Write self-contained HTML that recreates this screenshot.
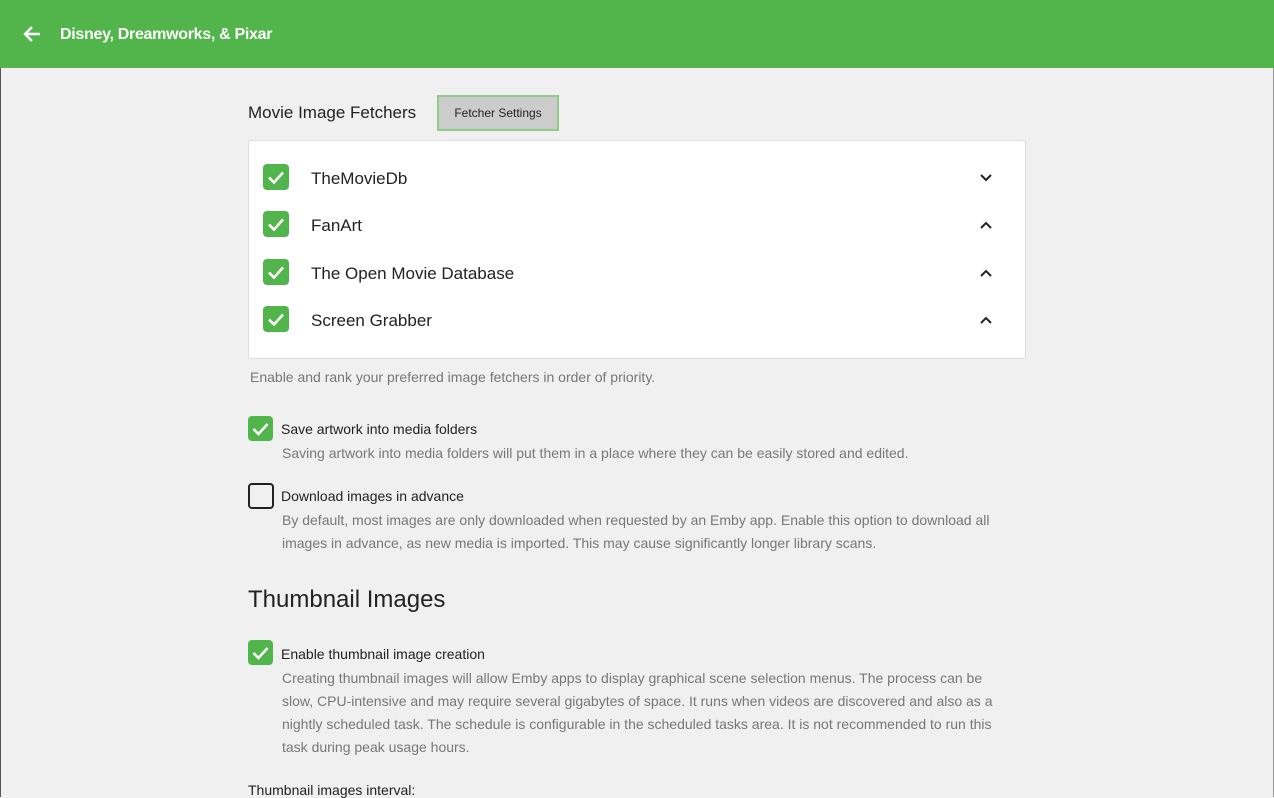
<!DOCTYPE html>
<html><head><style>
*{margin:0;padding:0;box-sizing:border-box}
body{width:1274px;height:797px;overflow:hidden;background:#f0f0f0;font-family:"Liberation Sans",sans-serif;position:relative}
.hdr{position:absolute;left:0;top:0;width:1274px;height:68px;background:#52b54b;color:#fff}
.hdr .t{position:absolute;left:60px;top:26px;font-size:16px;font-weight:bold;letter-spacing:-0.3px}
.abs{position:absolute}
.cb{position:absolute;width:26px;height:26px;border-radius:4px;background:#52b54b}
.cb svg{position:absolute;left:0;top:0}
.lbl{position:absolute;font-size:17px;color:#222}
.chev{position:absolute;left:979px}
.small{position:absolute;font-size:14px;color:#222}
.desc{position:absolute;font-size:14px;color:#777;line-height:23px;width:740px}
</style></head><body>
<div class="hdr">
<svg class="abs" style="left:22px;top:24px" width="20" height="20" viewBox="0 0 20 20"><path d="M18 10H3M10 3L3 10l7 7" stroke="#fff" stroke-width="2.4" fill="none"/></svg>
<div class="t">Disney, Dreamworks, &amp; Pixar</div>
</div>
<div class="abs" style="left:0;top:68px;width:1px;height:729px;background:#555"></div>
<div class="abs" style="left:1273px;top:68px;width:1px;height:729px;background:#999"></div>
<div class="abs" style="left:248px;top:103px;font-size:17px;color:#222">Movie Image Fetchers</div>
<div class="abs" style="left:437px;top:95px;width:122px;height:36px;background:#ccc;border:2px solid #8fcc8a;font-size:12px;color:#222;text-align:center;line-height:32px">Fetcher Settings</div>
<div class="abs" style="left:248px;top:140px;width:778px;height:219px;background:#fff;border:1px solid #ddd;border-radius:3px"></div>

<div class="cb" style="left:263px;top:164px"><svg width="26" height="26"><path d="M6 13.5l5 5 9-10" stroke="#fff" stroke-width="2.6" fill="none"/></svg></div>
<div class="lbl" style="left:311px;top:169px">TheMovieDb</div>
<svg class="chev" style="top:171px" width="14" height="14"><path d="M2 4l5 5 5-5" stroke="#222" stroke-width="2" fill="none"/></svg>

<div class="cb" style="left:263px;top:211px"><svg width="26" height="26"><path d="M6 13.5l5 5 9-10" stroke="#fff" stroke-width="2.6" fill="none"/></svg></div>
<div class="lbl" style="left:311px;top:216px">FanArt</div>
<svg class="chev" style="top:218px" width="14" height="14"><path d="M2 10l5-5 5 5" stroke="#222" stroke-width="2" fill="none"/></svg>

<div class="cb" style="left:263px;top:259px"><svg width="26" height="26"><path d="M6 13.5l5 5 9-10" stroke="#fff" stroke-width="2.6" fill="none"/></svg></div>
<div class="lbl" style="left:311px;top:264px">The Open Movie Database</div>
<svg class="chev" style="top:266px" width="14" height="14"><path d="M2 10l5-5 5 5" stroke="#222" stroke-width="2" fill="none"/></svg>

<div class="cb" style="left:263px;top:306px"><svg width="26" height="26"><path d="M6 13.5l5 5 9-10" stroke="#fff" stroke-width="2.6" fill="none"/></svg></div>
<div class="lbl" style="left:311px;top:311px">Screen Grabber</div>
<svg class="chev" style="top:313px" width="14" height="14"><path d="M2 10l5-5 5 5" stroke="#222" stroke-width="2" fill="none"/></svg>

<div class="desc" style="left:250px;top:366px">Enable and rank your preferred image fetchers in order of priority.</div>

<div class="cb" style="left:248px;top:416px;width:25px;height:25px"><svg width="26" height="26"><path d="M5.5 13l5 5 9-10" stroke="#fff" stroke-width="2.6" fill="none"/></svg></div>
<div class="small" style="left:281px;top:421px">Save artwork into media folders</div>
<div class="desc" style="left:282px;top:442px">Saving artwork into media folders will put them in a place where they can be easily stored and edited.</div>

<div class="abs" style="left:248px;top:483px;width:26px;height:26px;border:2px solid #222;border-radius:4px"></div>
<div class="small" style="left:281px;top:488px">Download images in advance</div>
<div class="desc" style="left:282px;top:509px;width:740px">By default, most images are only downloaded when requested by an Emby app. Enable this option to download all images in advance, as new media is imported. This may cause significantly longer library scans.</div>

<div class="abs" style="left:248px;top:586px;font-size:24px;color:#222">Thumbnail Images</div>

<div class="cb" style="left:248px;top:640px;width:25px;height:25px"><svg width="26" height="26"><path d="M5.5 13l5 5 9-10" stroke="#fff" stroke-width="2.6" fill="none"/></svg></div>
<div class="small" style="left:281px;top:646px">Enable thumbnail image creation</div>
<div class="desc" style="left:282px;top:667px;width:722px">Creating thumbnail images will allow Emby apps to display graphical scene selection menus. The process can be slow, CPU-intensive and may require several gigabytes of space. It runs when videos are discovered and also as a nightly scheduled task. The schedule is configurable in the scheduled tasks area. It is not recommended to run this task during peak usage hours.</div>

<div class="small" style="left:248px;top:782px">Thumbnail images interval:</div>
</body></html>
